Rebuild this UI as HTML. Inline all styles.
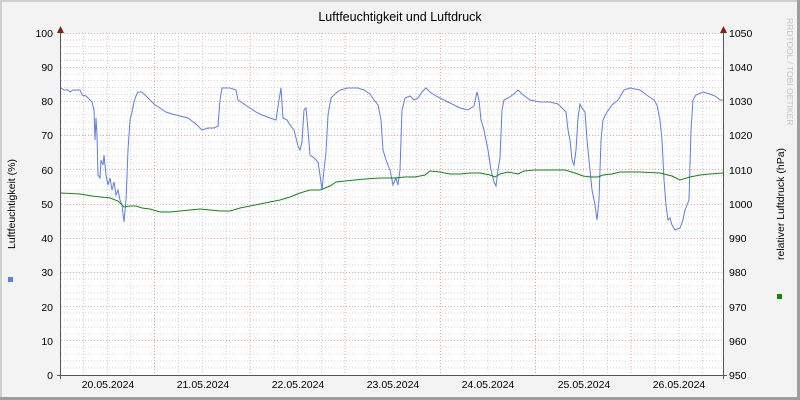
<!DOCTYPE html>
<html><head><meta charset="utf-8"><style>
html,body{margin:0;padding:0;background:#f3f3f3}
svg{display:block}
text{font-family:"Liberation Sans",sans-serif;font-size:10.5px;fill:#000}
</style></head><body>
<svg width="800" height="400" viewBox="0 0 800 400" xmlns="http://www.w3.org/2000/svg">
<rect x="0" y="0" width="800" height="400" fill="#f3f3f3"/>
<rect x="0" y="0" width="800" height="2" fill="#cfcfcf"/>
<rect x="0" y="0" width="2" height="400" fill="#cfcfcf"/>
<rect x="797" y="0" width="3" height="400" fill="#9e9e9e"/>
<rect x="0" y="397" width="800" height="3" fill="#9e9e9e"/>
<rect x="61" y="33" width="662" height="342" fill="#ffffff"/>
<g stroke="#d0d0d0" stroke-width="1" stroke-dasharray="1,2" shape-rendering="crispEdges">
<path d="M61 39.8H723M61 46.7H723M61 53.5H723M61 60.4H723M61 73.9H723M61 80.7H723M61 87.6H723M61 94.4H723M61 108H723M61 115H723M61 122H723M61 129H723M61 142H723M61 149H723M61 156H723M61 163H723M61 176H723M61 183H723M61 190H723M61 197H723M61 211H723M61 217H723M61 224H723M61 231H723M61 245H723M61 252H723M61 258H723M61 265H723M61 279H723M61 286H723M61 293H723M61 299H723M61 313H723M61 320H723M61 327H723M61 334H723M61 347H723M61 354H723M61 361H723M61 368H723"/>
<path d="M83.5 33V375M107.3 33V375M131.1 33V375M178.5 33V375M202.3 33V375M226.1 33V375M273.8 33V375M297.6 33V375M321.4 33V375M369.1 33V375M392.9 33V375M416.7 33V375M464.4 33V375M488.2 33V375M512 33V375M559.7 33V375M583.5 33V375M607.3 33V375M655 33V375M678.8 33V375M702.6 33V375"/>
</g>
<g stroke="#e8a0a0" stroke-width="1" stroke-dasharray="1,2" shape-rendering="crispEdges">
<path d="M61 33.5H723M61 67.5H723M61 101.5H723M61 135.5H723M61 169.5H723M61 204.5H723M61 238.5H723M61 272.5H723M61 306.5H723M61 340.5H723"/>
<path d="M154.5 33V375M249.8 33V375M345.1 33V375M440.4 33V375M535.7 33V375M631 33V375"/>
</g>
<polyline fill="none" stroke="#5a7fe6" stroke-width="1" points="61,88 64,90 68,90 70,92 73,90 80,90 82,95 86,96 88,98 92,102 94,110 95,140 96,118 97,135 98,175 100,178 101,160 103,165 104,155 106,175 108,185 110,178 112,190 114,182 116,195 118,190 120,200 122,205 124,222 126,200 128,150 130,120 132,112 134,102 136,96 138,92 142,92 146,96 150,100 154,104 160,108 166,112 172,114 180,116 188,118 196,124 202,130 208,128 214,128 218,126 220,100 222,88 230,88 236,90 238,100 244,104 250,108 256,112 262,115 270,118 276,120 279,100 281,88 283,118 287,120 290,125 294,130 298,146 300,150 302,142 304,110 306,108 308,130 310,155 314,158 318,162 320,175 322,190 324,170 326,152 328,115 331,98 335,94 340,90 348,88 358,88 364,90 370,94 374,100 378,105 381,120 383,150 386,160 390,170 393,185 396,178 398,185 400,170 402,110 405,98 410,96 414,100 418,98 422,92 426,88 430,92 436,96 444,100 452,104 460,108 468,110 474,106 477,92 479,100 481,120 484,130 488,150 491,170 494,182 496,186 498,170 500,158 502,110 504,100 508,98 514,94 518,90 522,94 530,100 540,102 550,102 558,104 562,108 566,112 568,130 570,140 572,160 574,165 576,150 578,118 580,104 582,108 585,112 587,140 589,160 592,190 595,205 597,220 599,200 601,140 603,120 607,112 612,105 618,100 624,90 630,88 640,90 648,96 654,100 657,105 660,120 662,140 664,180 666,205 668,220 670,218 672,225 675,230 680,228 683,220 685,210 687,205 689,200 691,130 693,100 696,95 703,92 710,94 715,96 720,100 723,100"/>
<polyline fill="none" stroke="#0d8a0d" stroke-width="1" points="61,193 80,194 92,196 110,198 118,201 124,207 130,206 136,206 142,208 150,209 160,212 170,212 180,211 190,210 200,209 210,210 220,211 230,211 240,208 250,206 260,204 270,202 280,200 290,197 300,193 310,190 320,190 330,186 336,182 345,181 355,180 365,179 380,178 395,178 405,177 415,177 425,175 430,171 440,172 450,174 460,174 470,173 480,173 490,175 495,177 500,174 508,172 518,174 524,171 535,170 550,170 565,170 575,173 583,176 590,177 598,177 603,175 612,174 620,172 640,172 660,173 672,176 680,180 690,177 700,175 710,174 723,173"/>
<g shape-rendering="crispEdges">
<line x1="60.5" y1="30" x2="60.5" y2="379" stroke="#555" stroke-width="1"/>
<line x1="723.5" y1="30" x2="723.5" y2="379" stroke="#555" stroke-width="1"/>
<line x1="57" y1="375.5" x2="727" y2="375.5" stroke="#555" stroke-width="1"/>
</g>
<polygon points="57,33 64,33 60.5,26" fill="#8b1a1a"/>
<polygon points="720,33 727,33 723.5,26" fill="#8b1a1a"/>
<g text-anchor="end">
<text x="53" y="37">100</text><text x="53" y="71">90</text><text x="53" y="105">80</text><text x="53" y="139">70</text><text x="53" y="174">60</text><text x="53" y="208">50</text><text x="53" y="242">40</text><text x="53" y="276">30</text><text x="53" y="311">20</text><text x="53" y="345">10</text><text x="53" y="379">0</text>
</g>
<g>
<text x="729" y="37">1050</text><text x="729" y="71">1040</text><text x="729" y="105">1030</text><text x="729" y="139">1020</text><text x="729" y="174">1010</text><text x="729" y="208">1000</text><text x="729" y="242">990</text><text x="729" y="276">980</text><text x="729" y="311">970</text><text x="729" y="345">960</text><text x="729" y="379">950</text>
</g>
<g text-anchor="middle">
<text x="108" y="388">20.05.2024</text><text x="203" y="388">21.05.2024</text><text x="298" y="388">22.05.2024</text><text x="393" y="388">23.05.2024</text><text x="488" y="388">24.05.2024</text><text x="584" y="388">25.05.2024</text><text x="679" y="388">26.05.2024</text>
<text x="400" y="21" style="font-size:12.5px">Luftfeuchtigkeit und Luftdruck</text>
<text transform="translate(15,204) rotate(-90)">Luftfeuchtigkeit (%)</text>
<text transform="translate(784,204) rotate(-90)">relativer Luftdruck (hPa)</text>
</g>
<text transform="translate(787,18) rotate(90)" style="font-size:8.5px;fill:#c4c4c4">RRDTOOL / TOBI OETIKER</text>
<rect x="8" y="277" width="5" height="5" fill="#5a7fe6"/>
<rect x="777" y="294" width="5" height="5" fill="#0d8a0d"/>
</svg>
</body></html>
